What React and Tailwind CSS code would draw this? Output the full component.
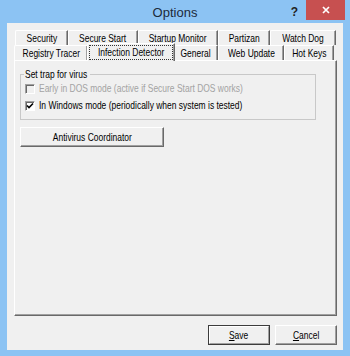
import React from 'react';

const topTabs = [
  { label: 'Security', cls: 'w-[53px]' },
  { label: 'Secure Start', cls: 'w-[70px]' },
  { label: 'Startup Monitor', cls: 'w-[80px]' },
  { label: 'Partizan', cls: 'w-[52px]' },
  { label: 'Watch Dog', cls: 'w-[66px]' },
];

const bottomTabs = [
  { label: 'Registry Tracer', cls: 'w-[74px]' },
  { label: 'Infection Detector', cls: 'w-[88px]', active: true },
  { label: 'General', cls: 'w-[44px]' },
  { label: 'Web Update', cls: 'w-[66px]' },
  { label: 'Hot Keys', cls: 'w-[50px]' },
];

// narrow text, the dialog font is much narrower than Arial
const T = ({ children, o = 'origin-center' }) => (
  <span className={`inline-block whitespace-nowrap scale-x-[0.77] ${o}`}>{children}</span>
);

// classic 3D tab
const Tab = ({ label, cls, active }) => {
  if (active) {
    return (
      <div className={`${cls} relative z-10 -mt-[2px] -mb-[1px] -mx-[1px] bg-[#f0f0f0] border-t border-l border-white rounded-tl-[2px] border-r border-r-[#696969] shadow-[inset_-1px_0_#a0a0a0] flex items-start justify-center pt-[1px]`}>
        <span className="w-[84px] border border-dotted border-[#333] flex justify-center leading-[13px]"><T>{label}</T></span>
      </div>
    );
  }
  return (
    <div className={`${cls} h-full border-t border-l border-white rounded-tl-[2px] border-r border-r-[#696969] shadow-[inset_-1px_0_#a0a0a0] flex items-start justify-center pt-[1px] leading-[13px]`}>
      <T>{label}</T>
    </div>
  );
};

const Checkbox = ({ checked, disabled }) => (
  <span className={`w-[10px] h-[10px] shrink-0 border-t border-l border-[#a0a0a0] border-r border-b border-r-white border-b-white shadow-[inset_1px_1px_#696969] flex items-center justify-center ${disabled ? 'bg-[#f0f0f0]' : 'bg-white'}`}>
    {checked && (
      <svg width="8" height="8" viewBox="0 0 8 8">
        <path d="M1 3.5 L3 5.5 L7 1.5" stroke="#000" strokeWidth="1.6" fill="none" />
      </svg>
    )}
  </span>
);

const Button = ({ children, cls, isDefault }) => (
  <button className={`${cls} h-[20px] bg-[#f0f0f0] ${isDefault ? 'border border-[#3c3c3c]' : 'border border-t-white border-l-white border-r-[#696969] border-b-[#696969]'} flex items-center justify-center leading-none`}>
    <span className={`w-full h-full flex items-center justify-center ${isDefault ? 'border border-t-white border-l-white border-r-[#a0a0a0] border-b-[#a0a0a0]' : 'shadow-[inset_-1px_-1px_#a0a0a0]'}`}>
      {children}
    </span>
  </button>
);

export default function App() {
  return (
    <div className="w-[350px] h-[356px] bg-[#8cc3f3] flex flex-col px-[7px] pb-[6px] font-['Liberation_Sans',Arial,sans-serif] text-[11px] text-black">
      {/* Title bar */}
      <div className="h-[23px] -mx-[7px] grid grid-cols-[1fr_auto_1fr]">
        <div />
        <div className="text-[13px] text-[#1c2a3a] leading-[26px]">Options</div>
        <div className="flex justify-end items-start pr-[5px]">
          <span className="font-bold text-[12px] text-[#222] mt-[3px] mr-[8px]">?</span>
          <div className="w-[39px] h-[20px] bg-[#c75050] flex items-center justify-center">
            <svg width="8" height="8" viewBox="0 0 8 8">
              <path d="M1 1 L7 7 M7 1 L1 7" stroke="#fff" strokeWidth="1.7" />
            </svg>
          </div>
        </div>
      </div>

      {/* Client area */}
      <div className="flex-1 bg-[#f0f0f0] flex flex-col pt-[7px] pl-[7px] pr-[6px]">
        {/* Tab rows */}
        <div className="h-[15px] flex pl-[1px]">
          {topTabs.map(t => <Tab key={t.label} {...t} />)}
        </div>
        <div className="h-[15px] flex">
          {bottomTabs.map(t => <Tab key={t.label} {...t} />)}
        </div>

        {/* Tab page */}
        <div className="h-[256px] border-t border-l border-white border-r border-b border-r-[#696969] border-b-[#696969] shadow-[inset_-1px_-1px_#a0a0a0] pl-[5px] pt-[7px]">
          <fieldset className="w-[296px] h-[52px] border border-[#c8c8c8] pl-[4px]">
            <legend className="w-[66px] px-[1px] -ml-[1px] leading-[13px]"><T o="origin-left">Set trap for virus</T></legend>
            <div className="flex items-center gap-[4px] h-[17px] -mt-[1px] text-[#a3a3a3]">
              <Checkbox disabled />
              <T o="origin-left">Early in DOS mode (active if Secure Start DOS works)</T>
            </div>
            <div className="flex items-center gap-[4px] h-[17px]">
              <Checkbox checked />
              <T o="origin-left">In Windows mode (periodically when system is tested)</T>
            </div>
          </fieldset>
          <Button cls="w-[144px] mt-[7px]"><T>Antivirus Coordinator</T></Button>
        </div>

        {/* Dialog buttons */}
        <div className="flex justify-end gap-[5px] mt-[9px]">
          <Button cls="w-[62px]" isDefault><T><span className="underline">S</span>ave</T></Button>
          <Button cls="w-[62px]"><T><span className="underline">C</span>ancel</T></Button>
        </div>
      </div>
    </div>
  );
}
